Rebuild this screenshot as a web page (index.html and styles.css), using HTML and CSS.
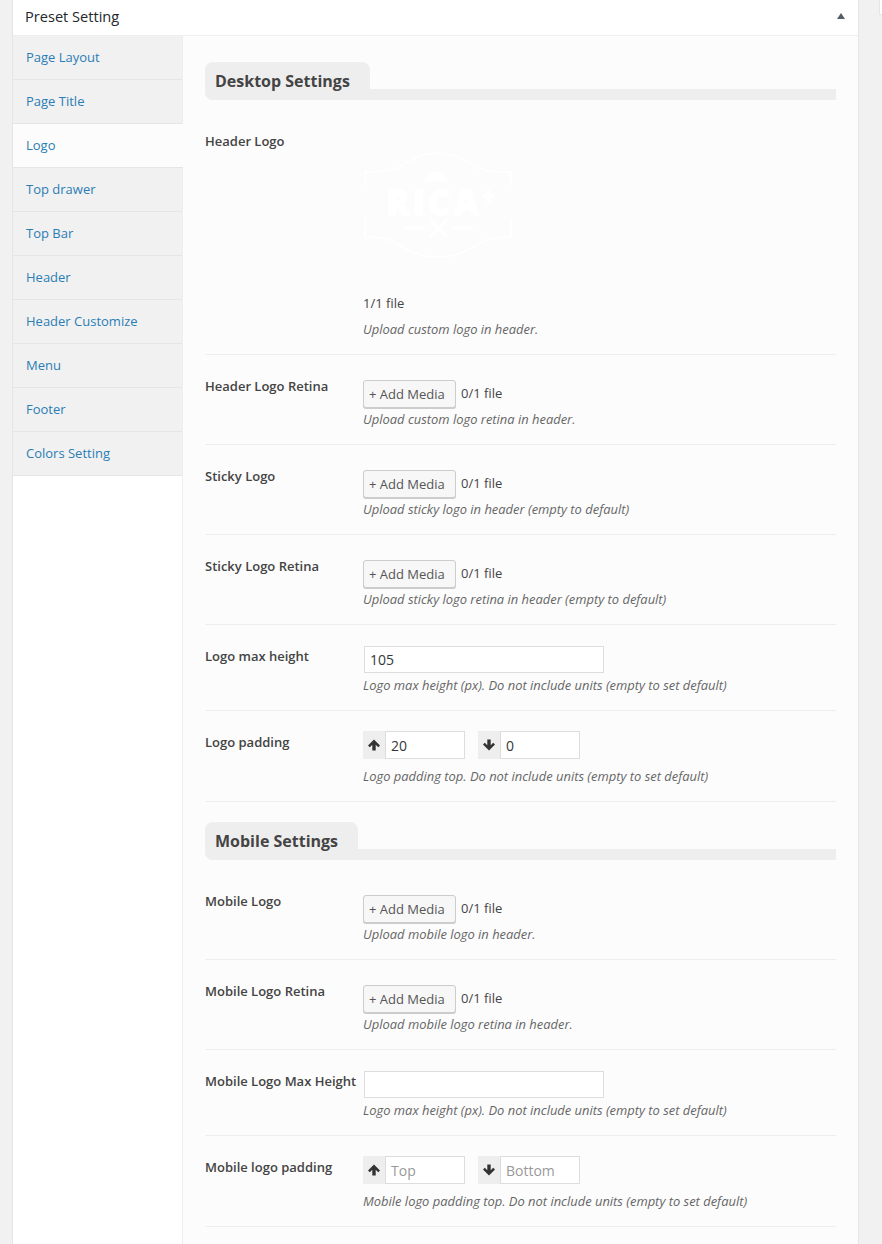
FILE: index.html
```html
<!DOCTYPE html>
<html lang="en">
<head>
<meta charset="utf-8">
<title>Preset Setting</title>
<link rel="stylesheet" href="styles.css">
</head>
<body>
<div class="side-peek"></div>
<section class="box">
  <header class="box-head">
    <h2 class="box-title">Preset Setting</h2>
    <span class="toggle"></span>
  </header>
  <div class="box-body">
    <ul class="tabs">
      <li class="tab"><a>Page Layout</a></li>
      <li class="tab"><a>Page Title</a></li>
      <li class="tab active"><a>Logo</a></li>
      <li class="tab"><a>Top drawer</a></li>
      <li class="tab"><a>Top Bar</a></li>
      <li class="tab"><a>Header</a></li>
      <li class="tab"><a>Header Customize</a></li>
      <li class="tab"><a>Menu</a></li>
      <li class="tab"><a>Footer</a></li>
      <li class="tab"><a>Colors Setting</a></li>
    </ul>
    <div class="panel">
      <div class="section-head first"><h3>Desktop Settings</h3></div>

      <div class="row row-logo">
        <div class="label">Header Logo</div>
        <div class="field">
          <svg class="logo" width="150" height="112" viewBox="0 0 150 112" fill="none" stroke="#ffffff" stroke-width="1.5">
            <path d="M2 33 V20 Q28 20 37 15 Q75 -13 113 15 Q122 20 148 20 V33"/>
            <path d="M2 66 V85 Q28 85 37 94 Q75 116 113 94 Q122 85 148 85 V66"/>
            <path d="M62 28 Q73 12 84 28 Z" fill="#ffffff"/>
            <text x="23" y="63" class="logo-text">RICA<tspan class="logo-plus" dy="-10">+</tspan></text>
            <path d="M67 68 L84 85 M84 68 L67 85" stroke-width="2.5"/>
            <path d="M42 76 H62 M90 76 H110" stroke-width="3"/>
          </svg>
          <div class="file-count count-block">1/1 file</div>
          <p class="desc desc-logo">Upload custom logo in header.</p>
        </div>
      </div>

      <div class="row">
        <div class="label">Header Logo Retina</div>
        <div class="field">
          <div class="media-line"><button class="btn">+ Add Media</button><span class="file-count">0/1 file</span></div>
          <p class="desc">Upload custom logo retina in header.</p>
        </div>
      </div>

      <div class="row">
        <div class="label">Sticky Logo</div>
        <div class="field">
          <div class="media-line"><button class="btn">+ Add Media</button><span class="file-count">0/1 file</span></div>
          <p class="desc">Upload sticky logo in header (empty to default)</p>
        </div>
      </div>

      <div class="row">
        <div class="label">Sticky Logo Retina</div>
        <div class="field">
          <div class="media-line"><button class="btn">+ Add Media</button><span class="file-count">0/1 file</span></div>
          <p class="desc">Upload sticky logo retina in header (empty to default)</p>
        </div>
      </div>

      <div class="row row-input">
        <div class="label">Logo max height</div>
        <div class="field">
          <input class="text-input" type="text" value="105">
          <p class="desc">Logo max height (px). Do not include units (empty to set default)</p>
        </div>
      </div>

      <div class="row row-pad">
        <div class="label">Logo padding</div>
        <div class="field">
          <div class="pad-line">
            <div class="pad-group">
              <span class="pad-icon"><svg width="14" height="14" viewBox="0 0 14 14"><path d="M7 1.5 L13 7.5 L11.2 9.3 L8.7 6.8 V12.5 H5.3 V6.8 L2.8 9.3 L1 7.5 Z" fill="#333"/></svg></span>
              <input class="pad-input" type="text" value="20">
            </div>
            <div class="pad-group">
              <span class="pad-icon"><svg width="14" height="14" viewBox="0 0 14 14"><path d="M7 12.5 L13 6.5 L11.2 4.7 L8.7 7.2 V1.5 H5.3 V7.2 L2.8 4.7 L1 6.5 Z" fill="#333"/></svg></span>
              <input class="pad-input" type="text" value="0">
            </div>
          </div>
          <p class="desc">Logo padding top. Do not include units (empty to set default)</p>
        </div>
      </div>

      <div class="section-head"><h3>Mobile Settings</h3></div>

      <div class="row row-first">
        <div class="label">Mobile Logo</div>
        <div class="field">
          <div class="media-line"><button class="btn">+ Add Media</button><span class="file-count">0/1 file</span></div>
          <p class="desc">Upload mobile logo in header.</p>
        </div>
      </div>

      <div class="row">
        <div class="label">Mobile Logo Retina</div>
        <div class="field">
          <div class="media-line"><button class="btn">+ Add Media</button><span class="file-count">0/1 file</span></div>
          <p class="desc">Upload mobile logo retina in header.</p>
        </div>
      </div>

      <div class="row row-input">
        <div class="label">Mobile Logo Max Height</div>
        <div class="field">
          <input class="text-input" type="text">
          <p class="desc">Logo max height (px). Do not include units (empty to set default)</p>
        </div>
      </div>

      <div class="row row-pad">
        <div class="label">Mobile logo padding</div>
        <div class="field">
          <div class="pad-line">
            <div class="pad-group">
              <span class="pad-icon"><svg width="14" height="14" viewBox="0 0 14 14"><path d="M7 1.5 L13 7.5 L11.2 9.3 L8.7 6.8 V12.5 H5.3 V6.8 L2.8 9.3 L1 7.5 Z" fill="#333"/></svg></span>
              <input class="pad-input" type="text" placeholder="Top">
            </div>
            <div class="pad-group">
              <span class="pad-icon"><svg width="14" height="14" viewBox="0 0 14 14"><path d="M7 12.5 L13 6.5 L11.2 4.7 L8.7 7.2 V1.5 H5.3 V7.2 L2.8 4.7 L1 6.5 Z" fill="#333"/></svg></span>
              <input class="pad-input" type="text" placeholder="Bottom">
            </div>
          </div>
          <p class="desc">Mobile logo padding top. Do not include units (empty to set default)</p>
        </div>
      </div>
    </div>
  </div>
</section>
</body>
</html>
```
FILE: styles.css
```css
* { box-sizing: border-box; }
html, body { margin: 0; height: 1244px; overflow: hidden; }
body {
  background: #f1f1f1;
  font-family: "Open Sans", sans-serif;
  font-size: 13px;
  color: #444;
  padding-left: 12px;
  position: relative;
}
.side-peek {
  position: absolute;
  top: -1px;
  left: 879px;
  width: 20px;
  height: 16px;
  background: #fff;
  border: 1px solid #e5e5e5;
}
.box {
  width: 847px;
  height: 1244px;
  background: #fff;
  border-left: 1px solid #e5e5e5;
  border-right: 1px solid #e5e5e5;
  display: flex;
  flex-direction: column;
}
.box-head {
  height: 36px;
  flex: none;
  border-bottom: 1px solid #eee;
  display: flex;
  align-items: center;
  justify-content: space-between;
  padding: 0 13px 3px 12px;
}
.box-title {
  margin: 0;
  font-size: 14.6px;
  font-weight: 400;
  line-height: 20px;
  color: #23282d;
}
.toggle {
  width: 0;
  height: 0;
  border-left: 4px solid transparent;
  border-right: 4px solid transparent;
  border-bottom: 6px solid #555d66;
}
.box-body { flex: 1; display: flex; min-height: 0; }
.tabs {
  width: 170px;
  flex: none;
  margin: 0;
  padding: 0;
  list-style: none;
  background: #fff;
  border-right: 1px solid #eee;
}
.tab {
  height: 44px;
  background: #f1f1f1;
  border-bottom: 1px solid #e5e5e5;
  display: flex;
  align-items: center;
  padding: 0 0 2px 13px;
}
.tab a { line-height: 18px; color: #2b7db5; }
.tab.active {
  background: #fcfcfc;
  margin-right: -1px;
  position: relative;
}
.panel {
  flex: 1;
  background: #fcfcfc;
  padding: 0 22px 0 22px;
}
.section-head {
  height: 38px;
  margin-top: 20px;
  position: relative;
  background: linear-gradient(to bottom, transparent 27px, #eee 27px);
  border-bottom-left-radius: 8px;
}
.section-head.first { margin-top: 26px; }
.section-head h3 {
  display: inline-block;
  margin: 0;
  height: 38px;
  padding: 0 20px 0 10px;
  font-size: 16px;
  font-weight: 700;
  line-height: 38px;
  color: #444;
  background: #eee;
  border-radius: 8px 8px 0 8px;
}
.row {
  display: flex;
  height: 90px;
  padding-top: 25px;
  border-bottom: 1px solid #eee;
}
.row-logo { height: 255px; padding-top: 0; }
.row-first { height: 100px; padding-top: 35px; }
.row-input { height: 86px; padding-top: 21px; }
.row-pad { height: 91px; padding-top: 20px; }
.label {
  width: 158px;
  flex: none;
  font-weight: 600;
  line-height: 18px;
  color: #444;
  margin-top: -3px;
}
.row-logo .label { margin-top: 32px; }
.row-input .label { margin-top: 1px; }
.row-pad .label { margin-top: 2px; }
.field { flex: 1; min-width: 0; }
.logo { display: block; margin-top: 52px; }
.count-block { margin-top: 26px; line-height: 18px; }
.desc {
  margin: 0;
  font-size: 12.93px;
  font-style: italic;
  line-height: 18px;
  color: #666;
}
.desc-logo { margin-top: 4px; }
.media-line { display: flex; align-items: flex-start; height: 28px; margin-bottom: 2px; }
.btn {
  width: 93px;
  height: 28px;
  padding: 0 0 0 5px;
  text-align: left;
  font: 13px/26px "Open Sans", sans-serif;
  color: #555;
  background: #f7f7f7;
  border: 1px solid #ccc;
  border-radius: 3px;
  box-shadow: 0 1px 0 #ccc;
}
.file-count { color: #444; line-height: 26px; }
.media-line .file-count { margin-left: 5px; }
.text-input {
  display: block;
  width: 240px;
  height: 27px;
  margin: 0 0 3px 1px;
  padding: 0 5px;
  font: 14px "Open Sans", sans-serif;
  color: #32373c;
  background: #fff;
  border: 1px solid #ddd;
}
.pad-line { display: flex; gap: 13px; margin-bottom: 8px; }
.pad-group { display: flex; height: 28px; }
.pad-icon {
  width: 22px;
  background: #eee;
  display: flex;
  align-items: center;
  justify-content: center;
}
.pad-input {
  width: 80px;
  height: 28px;
  padding: 0 5px;
  font: 14px "Open Sans", sans-serif;
  color: #32373c;
  background: #fff;
  border: 1px solid #ddd;
}
.pad-input::placeholder { color: #999; opacity: 1; }
.logo-text { font: 800 35px "Open Sans", sans-serif; fill: #ffffff; stroke: #ffffff; stroke-width: 1.5px; letter-spacing: 3px; }
.logo-plus { font-size: 22px; }
```
